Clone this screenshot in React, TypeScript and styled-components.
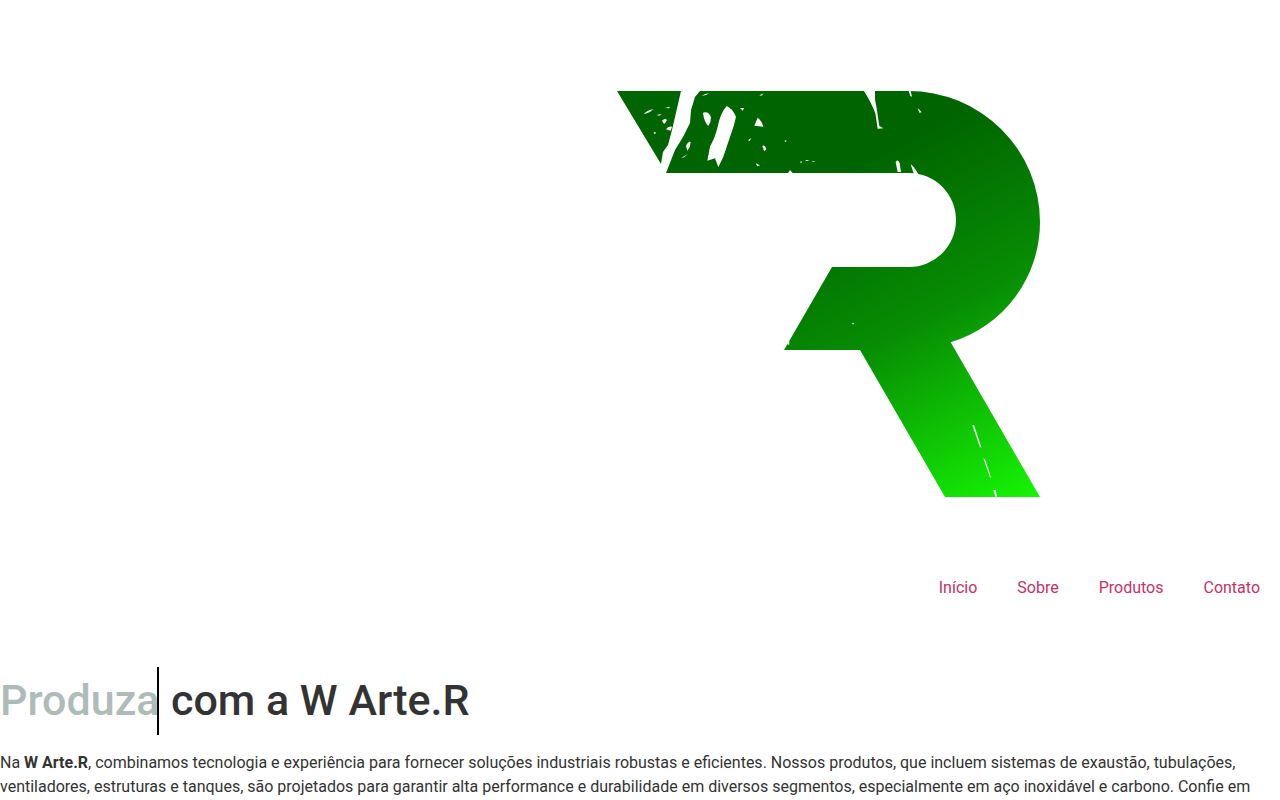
import React from "react";
import styled, { createGlobalStyle } from "styled-components";

const Global = createGlobalStyle`
  html, body { margin: 0; padding: 0; background: #fff; overflow: hidden; height: 100%; }
  body { font-family: Roboto, "Liberation Sans", sans-serif; color: #333; }
`;

const Header = styled.header`
  display: flex;
  flex-direction: column;
  align-items: stretch;
`;

const LogoBar = styled.div`
  display: flex;
  justify-content: flex-end;
  padding: 80px 230px 0 0;
`;

const LogoSvg = styled.svg`
  display: block;
  width: 440px;
  height: 430px;
`;

const Nav = styled.nav`
  display: flex;
  justify-content: flex-end;
  gap: 40px;
  padding: 66px 20px 0;
`;

const NavLink = styled.a`
  font-size: 16px;
  line-height: 24px;
  color: #c23366;
  text-decoration: none;
`;

const Main = styled.main`
  padding-top: 67px;
`;

const Title = styled.h1`
  margin: 0;
  display: flex;
  align-items: stretch;
  font-size: 43px;
  font-weight: 500;
  line-height: 66px;
  padding-bottom: 2px;
  color: #333;
  white-space: nowrap;
`;

const Typed = styled.span`
  display: block;
  box-sizing: border-box;
  width: 159px;
  height: 68px;
  overflow: hidden;
  color: #adbcb9;
  border-right: 2px solid #000;
  margin: 0 12px -2px 0;
`;

const Lead = styled.p`
  margin: 16px 0 0;
  font-size: 16px;
  line-height: 24px;
  color: #333;
`;

const scratches = [
  "M380 78 Q396 84 408 110 Q402 140 392 165 L370 230 L355 262 L345 235 L322 242 L330 200 Q345 175 352 145 Q360 100 380 78 Z",
  "M309 98 Q326 92 333 112 Q333 128 325 138 Q312 125 309 98 Z",
  "M463 137 L473 113 Q485 122 490 140 Z",
  "M305 48 Q315 40 328 40 Q318 46 305 48 Z",
  "M131 103 Q143 89 160 88 Q150 98 131 103 Z",
  "M195 84 L210 80 L207 85 Z",
  "M170 105 L185 102 L178 107 Z",
  "M186 122 Q194 113 201 120 Q198 128 192 132 Z",
  "M160 158 L168 156 L165 163 Z",
  "M198 148 Q204 138 216 140 L212 152 Z",
  "M258 197 Q266 182 272 186 Q272 200 262 212 Z",
  "M243 234 L264 222 L252 232 Z",
  "M420 84 L432 84 L428 92 Z",
  "M478 46 L492 40 L484 47 Z",
  "M444 181 L454 174 L449 183 Z",
  "M487 199 Q494 192 499 208 L493 214 Z",
  "M553 182 L560 181 L557 186 Z",
  "M467 250 L480 256 L472 259 Z",
  "M600 246 L606 243 L604 250 Z",
  "M615 240 L628 240 L620 244 Z",
  "M637 243 L647 245 L638 246 Z",
  "M564 280 L570 270 L579 280 Z",
  "M792 33 H825 Q823 60 830 85 L838 138 L850 145 L833 146 L826 100 Q815 70 792 33 Z",
  "M926 33 H932 L936 50 L931 48 Z",
  "M953 84 L965 97 L958 98 Z",
  "M887 246 Q895 236 899 250 L903 276 L893 276 Z",
  "M932 253 Q945 263 955 283 L942 283 Z",
];

const lowerScratches = [
  "M607 375 L612 375 L634 442 L630 442 Z",
  "M640 475 L645 478 L664 535 L660 532 Z",
  "M670 570 L677 570 L681 590 L676 590 Z",
  "M246 68 L252 70 L249 74 Z",
  "M49 132 L58 122 L58 134 Z",
];

export default function App() {
  return (
    <>
      <Global />
      <Header>
        <LogoBar>
          <LogoSvg viewBox="610 80 440 430" aria-label="W Arte.R">
            <defs>
              <linearGradient id="wr" gradientUnits="userSpaceOnUse" x1="850" y1="165" x2="1025" y2="505">
                <stop offset="0" stopColor="#006400" />
                <stop offset="0.45" stopColor="#078d04" />
                <stop offset="1" stopColor="#16f504" />
              </linearGradient>
            </defs>
            <path
              fill="#006400"
              d="M617 91 H681 L672 130 L668 145 L663 152 L661 164 Z"
            />
            <path
              fill="url(#wr)"
              d="M666 173 L675 150 L683 137 L690 123 L691 110 L695 97 L700 91 H908 A131.500 131 0 0 1 1040 222 A125.700 125.700 0 0 1 950.700 342.300 L1040 497 H945 L860 350 H784 L832 267 H909 A47 47 0 0 0 909 173 Z"
            />
            <g transform="translate(600 80) scale(0.33333)" fill="#fff">
              {scratches.map((d) => (
                <path key={d} d={d} />
              ))}
            </g>
            <g transform="translate(770 300) scale(0.33333)" fill="#fff">
              {lowerScratches.map((d) => (
                <path key={d} d={d} />
              ))}
            </g>
          </LogoSvg>
        </LogoBar>
        <Nav>
          <NavLink href="#inicio">Início</NavLink>
          <NavLink href="#sobre">Sobre</NavLink>
          <NavLink href="#produtos">Produtos</NavLink>
          <NavLink href="#contato">Contato</NavLink>
        </Nav>
      </Header>
      <Main>
        <Title>
          <Typed>Produza</Typed>
          <span>com a W Arte.R</span>
        </Title>
        <Lead>
          Na <strong>W Arte.R</strong>, combinamos tecnologia e experiência para fornecer soluções industriais
          robustas e eficientes. Nossos produtos, que incluem sistemas de exaustão, tubulações, ventiladores,
          estruturas e tanques, são projetados para garantir alta performance e durabilidade em diversos segmentos,
          especialmente em aço inoxidável e carbono. Confie em nossa experiência para o seu projeto.
        </Lead>
      </Main>
    </>
  );
}
